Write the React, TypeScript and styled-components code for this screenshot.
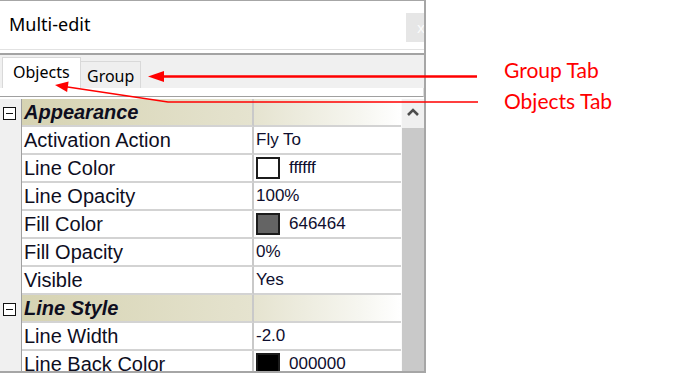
import React from "react"
import styled, { createGlobalStyle } from "styled-components"

const GlobalStyle = createGlobalStyle`
  html, body {
    margin: 0;
    padding: 0;
    background: #ffffff;
  }
  body {
    font-family: "Liberation Sans", Arial, sans-serif;
  }
`

type Prop = { name: string; value: string; swatch?: string }
type Category = { title: string; props: Prop[] }

const categories: Category[] = [
    {
        title: "Appearance",
        props: [
            { name: "Activation Action", value: "Fly To" },
            { name: "Line Color", value: "ffffff", swatch: "#ffffff" },
            { name: "Line Opacity", value: "100%" },
            { name: "Fill Color", value: "646464", swatch: "#646464" },
            { name: "Fill Opacity", value: "0%" },
            { name: "Visible", value: "Yes" },
        ],
    },
    {
        title: "Line Style",
        props: [
            { name: "Line Width", value: "-2.0" },
            { name: "Line Back Color", value: "000000", swatch: "#000000" },
        ],
    },
]

const App = () => {
    return (
        <Page>
            <GlobalStyle />
            <Window>
                <TitleBar>
                    <Title>Multi-edit</Title>
                    <CloseBox>x</CloseBox>
                </TitleBar>
                <Separator />
                <TabStrip>
                    <Tab $active>Objects</Tab>
                    <Tab>Group</Tab>
                </TabStrip>
                <TabPage />

                <GridArea>
                    <Table>
                        {categories.map((cat) => (
                            <React.Fragment key={cat.title}>
                                <CategoryRow>
                                    <Gutter>
                                        <Collapse />
                                    </Gutter>
                                    <CategoryName>{cat.title}</CategoryName>
                                    <CategoryValue />
                                </CategoryRow>
                                {cat.props.map((p) => (
                                    <Row key={p.name}>
                                        <Gutter />
                                        <NameCell>{p.name}</NameCell>
                                        <ValueCell>
                                            {p.swatch && <Swatch $color={p.swatch} />}
                                            {p.value}
                                        </ValueCell>
                                    </Row>
                                ))}
                            </React.Fragment>
                        ))}
                    </Table>

                    <Scrollbar>
                        <ScrollButton>
                            <svg width="14" height="10" viewBox="0 0 14 10">
                                <polyline points="2,8 7,3 12,8" fill="none" stroke="#4d4d4d" strokeWidth="2.6" />
                            </svg>
                        </ScrollButton>
                        <ScrollThumb />
                    </Scrollbar>
                </GridArea>
            </Window>

            <Notes>
                <Note>Group Tab</Note>
                <Note>Objects Tab</Note>
            </Notes>

            <Arrows width="680" height="373" viewBox="0 0 680 373">
                <line x1="477" y1="76.5" x2="160" y2="76.5" stroke="#ff0000" strokeWidth="2.4" />
                <polygon points="148,76.5 164,71 164,82" fill="#ff0000" />
                <polyline points="478,102 168,102 66,86.7" fill="none" stroke="#ff0000" strokeWidth="1.4" />
                <polygon points="55,85 68.6,81.5 67.1,92" fill="#ff0000" />
            </Arrows>
        </Page>
    )
}

const Page = styled.div`
    position: relative;
    display: flex;
    width: 680px;
    height: 373px;
    overflow: hidden;
`

const Window = styled.div`
    display: flex;
    flex-direction: column;
    width: 424px;
    height: 370px;
    border-top: 1px solid #a6a6a6;
    border-right: 2px solid #a6a6a6;
    border-bottom: 2px solid #a6a6a6;
    overflow: hidden;
    flex-shrink: 0;
`

const TitleBar = styled.div`
    display: flex;
    justify-content: space-between;
    align-items: flex-start;
    height: 47px;
    padding-left: 9px;
    flex-shrink: 0;
`

const Title = styled.div`
    font-family: "Noto Sans", "Open Sans", sans-serif;
    font-size: 18px;
    color: #000000;
    line-height: 47px;
`

const CloseBox = styled.div`
    width: 18px;
    height: 29px;
    margin-top: 12px;
    padding-left: 11px;
    box-sizing: border-box;
    background: #e6e6e6;
    color: #fbfbfb;
    font-family: "Noto Sans", sans-serif;
    font-size: 15px;
    line-height: 28px;
    overflow: hidden;
`

const Separator = styled.div`
    height: 3px;
    margin-top: 1px;
    border-top: 1px solid #e2e2e2;
    border-bottom: 2px solid #a3a3a3;
    flex-shrink: 0;
`

const TabStrip = styled.div`
    display: flex;
    align-items: flex-end;
    height: 33px;
    padding-left: 2px;
    background: #f0f0f0;
    flex-shrink: 0;
`

const Tab = styled.div<{ $active?: boolean }>`
    box-sizing: border-box;
    height: ${(p) => (p.$active ? "31px" : "27px")};
    width: ${(p) => (p.$active ? "79px" : "60px")};
    padding-left: ${(p) => (p.$active ? "10px" : "6px")};
    background: ${(p) => (p.$active ? "#ffffff" : "#efefef")};
    border: 1px solid #d9d9d9;
    border-bottom: none;
    border-left: ${(p) => (p.$active ? "1px solid #d9d9d9" : "none")};
    font-family: "Noto Sans", "Open Sans", sans-serif;
    font-size: 16px;
    line-height: ${(p) => (p.$active ? "29px" : "28px")};
    color: #000000;
`

const TabPage = styled.div`
    height: 8px;
    background: #ffffff;
    border-right: 1px solid #dcdcdc;
    border-bottom: 1px solid #a0a0a0;
    flex-shrink: 0;
`

const GridArea = styled.div`
    display: flex;
    flex: 1;
    min-height: 0;
    padding-top: 2px;
`

const Table = styled.div`
    display: flex;
    flex-direction: column;
    width: 401px;
`

const Row = styled.div`
    display: grid;
    grid-template-columns: 22px 232px 147px;
    height: 28px;
    flex-shrink: 0;
`

const CategoryRow = styled(Row)`
    background: linear-gradient(to right, #d6d3b2 22px, #e5e3cf 252px, #f6f6f0 360px, #ffffff 401px);
`

const Gutter = styled.div`
    display: flex;
    align-items: center;
    background: #f0f0f0;
    border-right: 1px solid #a0a0a0;
    padding-left: 3px;
`

const Collapse = styled.span`
    position: relative;
    width: 11px;
    height: 11px;
    border: 1.5px solid #111111;
    background: #ffffff;

    &::after {
        content: "";
        position: absolute;
        left: 2px;
        right: 2px;
        top: 5px;
        height: 1.5px;
        background: #111111;
    }
`

const cellBase = `
    box-sizing: border-box;
    height: 28px;
    border-bottom: 2px solid #d3d3d3;
    white-space: nowrap;
    overflow: hidden;
`

const NameCell = styled.div`
    ${cellBase}
    padding-left: 2px;
    border-right: 2px solid #c9c9c9;
    font-size: 20px;
    line-height: 27px;
    color: #0e0e1e;
    background: #ffffff;
`

const CategoryName = styled.div`
    ${cellBase}
    padding-left: 2px;
    border-right: 2px solid #c9c9c9;
    font-size: 20px;
    font-weight: bold;
    font-style: italic;
    line-height: 27px;
    color: #0e0e1e;
`

const CategoryValue = styled.div`
    ${cellBase}
`

const ValueCell = styled.div`
    ${cellBase}
    display: flex;
    align-items: center;
    gap: 9px;
    padding-left: 2px;
    padding-bottom: 1px;
    font-family: "Liberation Sans Narrow", "Liberation Sans", Arial, sans-serif;
    font-size: 17px;
    color: #0e0e2e;
    background: #ffffff;
`

const Swatch = styled.span<{ $color: string }>`
    box-sizing: border-box;
    width: 24px;
    height: 22px;
    border: 2px solid #1c1c1c;
    background: ${(p) => p.$color};
    flex-shrink: 0;
`

const Scrollbar = styled.div`
    display: flex;
    flex-direction: column;
    width: 23px;
    border-left: 1px solid #fafafa;
`

const ScrollButton = styled.div`
    display: flex;
    justify-content: center;
    align-items: center;
    height: 29px;
    background: #f0f0f0;
    padding-bottom: 4px;
    box-sizing: border-box;
`

const ScrollThumb = styled.div`
    flex: 1;
    background: #c9c9c9;
`

const Notes = styled.div`
    display: flex;
    flex-direction: column;
    padding-left: 78px;
    padding-top: 54px;
`

const Note = styled.div`
    font-family: Lato, "Open Sans", sans-serif;
    font-size: 21px;
    line-height: 31px;
    color: #ff0000;
    white-space: nowrap;
`

const Arrows = styled.svg`
    position: absolute;
    left: 0;
    top: 0;
    pointer-events: none;
`

export default App
